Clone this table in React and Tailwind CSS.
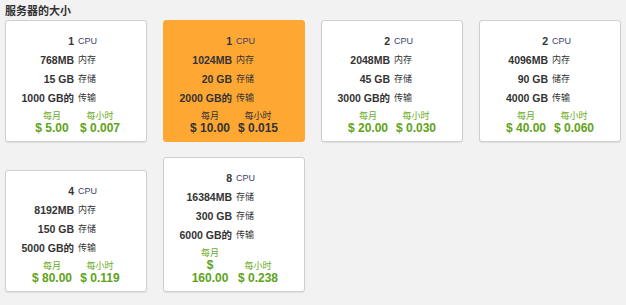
import React from "react";

const plans = [
  { cpu: "1", ram: "768MB", ramL: "内存", disk: "15 GB", diskL: "存储", bw: "1000 GB的", bwL: "传输", mo: ["$ 5.00"], hr: "$ 0.007" },
  { cpu: "1", ram: "1024MB", ramL: "内存", disk: "20 GB", diskL: "存储", bw: "2000 GB的", bwL: "传输", mo: ["$ 10.00"], hr: "$ 0.015", active: true },
  { cpu: "2", ram: "2048MB", ramL: "内存", disk: "45 GB", diskL: "存储", bw: "3000 GB的", bwL: "传输", mo: ["$ 20.00"], hr: "$ 0.030" },
  { cpu: "2", ram: "4096MB", ramL: "内存", disk: "90 GB", diskL: "储存", bw: "4000 GB", bwL: "传输", mo: ["$ 40.00"], hr: "$ 0.060" },
  { cpu: "4", ram: "8192MB", ramL: "内存", disk: "150 GB", diskL: "存储", bw: "5000 GB的", bwL: "传输", mo: ["$ 80.00"], hr: "$ 0.119" },
  { cpu: "8", ram: "16384MB", ramL: "存储", disk: "300 GB", diskL: "存储", bw: "6000 GB的", bwL: "传输", mo: ["$", "160.00"], hr: "$ 0.238" },
];

const font = { fontFamily: '"Liberation Sans", Arial, "Noto Sans CJK SC", sans-serif' };

function Row({ num, label, cpu }) {
  return (
    <div className="grid grid-cols-2 gap-x-[4px] h-[19px] items-center">
      <div className="text-right text-[10.5px] font-bold text-[#333] whitespace-nowrap">{num}</div>
      <div className={"text-left text-[9px] whitespace-nowrap " + (cpu ? "text-[#36426a]" : "text-[#333]")}>{label}</div>
    </div>
  );
}

function Card({ p }) {
  const labelC = p.active ? "text-[#333]" : "text-[#6aab1f]";
  const priceC = p.active ? "text-[#333]" : "text-[#5ea319]";
  return (
    <div
      className={
        "w-[142px] rounded-[3px] border pt-[11px] pb-[6px] " +
        (p.active ? "bg-[#ffa733] border-[#ffa733]" : "bg-white border-[#cfcfcf] shadow-[0_1px_1px_rgba(0,0,0,0.08)]")
      }
    >
      <Row num={p.cpu} label="CPU" cpu />
      <Row num={p.ram} label={p.ramL} />
      <Row num={p.disk} label={p.diskL} />
      <Row num={p.bw} label={p.bwL} />
      <div className="mt-[2px] flex justify-center items-end">
        <div className="w-[48px] text-center">
          <div className={"text-[9px] leading-[12px] " + labelC}>每月</div>
          {p.mo.map((m, i) => (
            <div key={i} className={"text-[12px] font-bold leading-[13px] whitespace-nowrap " + priceC}>{m}</div>
          ))}
        </div>
        <div className="w-[48px] text-center">
          <div className={"text-[9px] leading-[12px] " + labelC}>每小时</div>
          <div className={"text-[12px] font-bold leading-[13px] whitespace-nowrap " + priceC}>{p.hr}</div>
        </div>
      </div>
    </div>
  );
}

export default function App() {
  return (
    <div className="w-[626px] h-[305px] bg-[#f2f2f2] pl-[5px] pt-[4px]" style={font}>
      <div className="text-[11px] font-bold leading-[14px] text-[#333] mb-[2px]">服务器的大小</div>
      <div className="flex flex-wrap items-end gap-x-[16px] gap-y-[15px] w-[620px]">
        {plans.map((p, i) => (
          <Card key={i} p={p} />
        ))}
      </div>
    </div>
  );
}
